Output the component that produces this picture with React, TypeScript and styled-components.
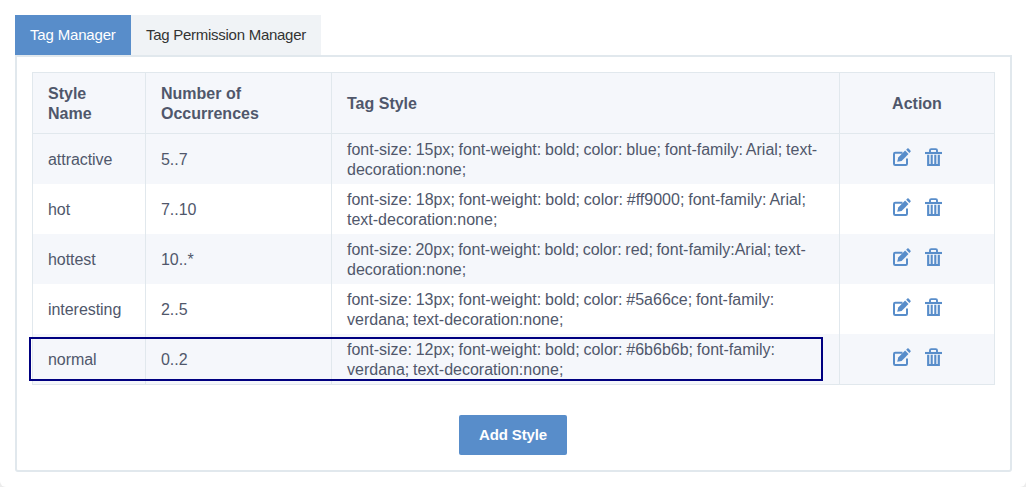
import React from 'react';
import styled, { createGlobalStyle } from 'styled-components';

const GlobalStyle = createGlobalStyle`
  * { box-sizing: border-box; }
  body {
    margin: 0;
    background: #ececec;
    font-family: 'Liberation Sans', Arial, Helvetica, sans-serif;
    font-size: 16px;
    line-height: 20px;
    color: #50576b;
  }
`;

const Page = styled.main`
  height: 487px;
  padding: 15px 14px 15px 15px;
  background: #fff;
  border-radius: 0 0 6px 6px;
`;

const Tabs = styled.nav`
  display: flex;
  height: 40px;
`;

const Tab = styled.button<{ $active?: boolean; $width: number }>`
  width: ${(p) => p.$width}px;
  padding: 0 0 0 15px;
  border: 0;
  font: inherit;
  font-size: 15px;
  text-align: left;
  letter-spacing: ${(p) => (p.$active ? '-0.17px' : '-0.27px')};
  white-space: nowrap;
  background: ${(p) => (p.$active ? '#588dca' : '#f0f3f6')};
  color: ${(p) => (p.$active ? '#fff' : '#333')};
`;

const Panel = styled.section`
  display: flex;
  flex-direction: column;
  height: 417px;
  padding: 15px;
  border: 2px solid #e1e8ed;
  border-radius: 0 0 3px 3px;
`;

const TableWrap = styled.div`
  position: relative;
`;

const Table = styled.table`
  width: 963px;
  table-layout: fixed;
  border: 1px solid #e1e8ed;
  border-collapse: separate;
  border-spacing: 0;
`;

const Col = styled.col<{ $width: number }>`
  width: ${(p) => p.$width}px;
`;

const HeadCell = styled.th<{ $center?: boolean }>`
  height: 61px;
  padding: 2px 15px 0;
  text-align: ${(p) => (p.$center ? 'center' : 'left')};
  background: #f5f7fb;
  border-bottom: 1px solid #e1e8ed;
  border-right: 1px solid #e1e8ed;
  &:last-child { border-right: 0; }
`;

const Row = styled.tr`
  &:nth-child(odd) { background: #f5f7fb; }
`;

const Cell = styled.td`
  height: 50px;
  padding: 2px 15px 0;
  border-right: 1px solid #e1e8ed;
  letter-spacing: -0.05px;
  &:last-child { border-right: 0; }
`;

const StyleLine = styled.span<{ $wordSpacing: number }>`
  display: block;
  white-space: nowrap;
  letter-spacing: 0;
  word-spacing: ${(p) => p.$wordSpacing}px;
`;

const Actions = styled.div`
  display: flex;
  justify-content: center;
  gap: 14px;
  height: 18px;
  margin: 0 0 6px 1px;
  color: #588dca;
`;

const Highlight = styled.div`
  position: absolute;
  left: -3px;
  bottom: 4px;
  width: 794px;
  height: 44px;
  border: 2px solid #000080;
`;

const AddButton = styled.button`
  align-self: center;
  width: 108px;
  height: 40px;
  margin-top: 30px;
  margin-right: 1px;
  padding: 0;
  border: 0;
  border-radius: 2px;
  background: #588dca;
  color: #fff;
  font: inherit;
  font-size: 15px;
  font-weight: bold;
  letter-spacing: -0.15px;
`;

const EditIcon = () => (
  <svg width="18" height="18" viewBox="0 0 18 18" fill="none">
    <path d="M9.5 4.7H2.2Q1 4.7 1 5.9V15.8Q1 17 2.2 17H12.8Q14 17 14 15.8V10.5" stroke="currentColor" strokeWidth="2" />
    <path d="M4.2 13.8L5.2 9.5L12.1 2.6L15.5 6L8.6 12.9Z" fill="currentColor" />
    <path d="M13.2 1.7L14.3 0.6Q15 0 15.6 0.6L17.4 2.4Q18.1 3.1 17.5 3.8L16.4 4.9Z" fill="currentColor" />
  </svg>
);

const TrashIcon = () => (
  <svg width="17" height="18" viewBox="0 0 17 18" fill="none" stroke="currentColor">
    <path d="M5 4.5V2.2Q5 1.1 6.2 1.1H10.8Q12 1.1 12 2.2V4.5" strokeWidth="1.9" />
    <path d="M0 5H17" strokeWidth="2.1" />
    <path d="M3.2 6.8V17M13.8 6.8V17M2.1 17H14.9" strokeWidth="2.2" />
    <path d="M6.7 6.8V17M10.3 6.8V17" strokeWidth="2.1" />
  </svg>
);

const rows = [
  { name: 'attractive', range: '5..7', wordSpacing: -0.7, lines: ['font-size: 15px; font-weight: bold; color: blue; font-family: Arial; text-', 'decoration:none;'] },
  { name: 'hot', range: '7..10', wordSpacing: -0.6, lines: ['font-size: 18px; font-weight: bold; color: #ff9000; font-family: Arial;', 'text-decoration:none;'] },
  { name: 'hottest', range: '10..*', wordSpacing: -0.9, lines: ['font-size: 20px; font-weight: bold; color: red; font-family:Arial; text-', 'decoration:none;'] },
  { name: 'interesting', range: '2..5', wordSpacing: -0.7, lines: ['font-size: 13px; font-weight: bold; color: #5a66ce; font-family:', 'verdana; text-decoration:none;'] },
  { name: 'normal', range: '0..2', wordSpacing: -0.7, lines: ['font-size: 12px; font-weight: bold; color: #6b6b6b; font-family:', 'verdana; text-decoration:none;'] },
];

export default function App() {
  return (
    <>
      <GlobalStyle />
      <Page>
        <Tabs>
          <Tab $active $width={116}>Tag Manager</Tab>
          <Tab $width={190}>Tag Permission Manager</Tab>
        </Tabs>
        <Panel>
          <TableWrap>
            <Table>
              <colgroup>
                <Col $width={113} />
                <Col $width={186} />
                <Col $width={508} />
                <Col $width={154} />
              </colgroup>
              <thead>
                <tr>
                  <HeadCell>Style<br />Name</HeadCell>
                  <HeadCell>Number of<br />Occurrences</HeadCell>
                  <HeadCell>Tag Style</HeadCell>
                  <HeadCell $center>Action</HeadCell>
                </tr>
              </thead>
              <tbody>
                {rows.map((row) => (
                  <Row key={row.name}>
                    <Cell>{row.name}</Cell>
                    <Cell>{row.range}</Cell>
                    <Cell>
                      {row.lines.map((line) => (
                        <StyleLine key={line} $wordSpacing={row.wordSpacing}>{line}</StyleLine>
                      ))}
                    </Cell>
                    <Cell>
                      <Actions>
                        <EditIcon />
                        <TrashIcon />
                      </Actions>
                    </Cell>
                  </Row>
                ))}
              </tbody>
            </Table>
            <Highlight />
          </TableWrap>
          <AddButton>Add Style</AddButton>
        </Panel>
      </Page>
    </>
  );
}
